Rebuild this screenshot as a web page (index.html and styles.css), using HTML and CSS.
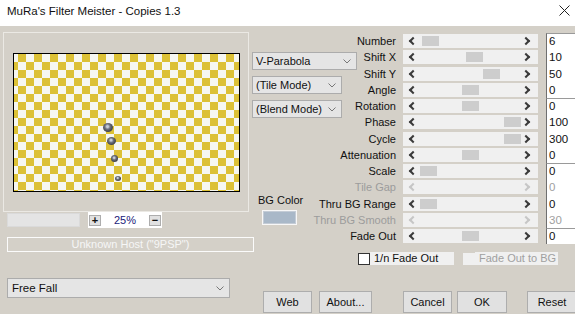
FILE: index.html
```html
<!DOCTYPE html>
<html>
<head>
<meta charset="utf-8">
<link rel="stylesheet" href="styles.css">
</head>
<body>
<div class="window">
  <header class="titlebar">
    <span class="title">MuRa's Filter Meister - Copies 1.3</span>
    <svg class="close" width="11" height="11" viewBox="0 0 11 11"><path d="M0.5 0.5 L10.5 10.5 M10.5 0.5 L0.5 10.5" stroke="#222" stroke-width="1" fill="none"/></svg>
  </header>
  <div class="main">
    <div class="left">
      <div class="group">
        <div class="canvas">
          <span class="gem" style="left:89px;top:69px;width:10px;height:9px"></span>
          <span class="gem" style="left:93px;top:83px;width:9px;height:8px"></span>
          <span class="gem" style="left:97px;top:101px;width:7px;height:7px"></span>
          <span class="gem" style="left:101px;top:122px;width:6px;height:5px"></span>
        </div>
      </div>
      <div class="zoomrow">
        <div class="zoombar"></div>
        <div class="zoomctl">
          <span class="zbtn">+</span>
          <span class="zval">25%</span>
          <span class="zbtn">&minus;</span>
        </div>
      </div>
      <div class="host">Unknown Host ("9PSP")</div>
      <div class="combo freefall">
        <span>Free Fall</span>
        <svg class="chev" width="8" height="5" viewBox="0 0 8 5"><path d="M0.5 0.5 L4 4 L7.5 0.5" stroke="#777" fill="none"/></svg>
      </div>
    </div>
    <div class="right">
      <div class="top">
        <div class="mid">
          <div class="combo parab">
            <span>V-Parabola</span>
            <svg class="chev" width="8" height="5" viewBox="0 0 8 5"><path d="M0.5 0.5 L4 4 L7.5 0.5" stroke="#777" fill="none"/></svg>
          </div>
          <div class="combo mode">
            <span>(Tile Mode)</span>
            <svg class="chev" width="8" height="5" viewBox="0 0 8 5"><path d="M0.5 0.5 L4 4 L7.5 0.5" stroke="#777" fill="none"/></svg>
          </div>
          <div class="combo mode">
            <span>(Blend Mode)</span>
            <svg class="chev" width="8" height="5" viewBox="0 0 8 5"><path d="M0.5 0.5 L4 4 L7.5 0.5" stroke="#777" fill="none"/></svg>
          </div>
          <div class="bglabel">BG Color</div>
          <div class="swatch"></div>
        </div>
        <div class="sliders">
          <div class="grp">
            <div class="row"><div class="lbl"><span>Number</span></div><div class="track"><i class="al"></i><span class="thumb" style="left:19px"></span><i class="ar"></i></div><div class="fld">6</div></div>
            <div class="row"><div class="lbl"><span>Shift X</span></div><div class="track"><i class="al"></i><span class="thumb" style="left:63px"></span><i class="ar"></i></div><div class="fld">10</div></div>
            <div class="row"><div class="lbl"><span>Shift Y</span></div><div class="track"><i class="al"></i><span class="thumb" style="left:80px"></span><i class="ar"></i></div><div class="fld">50</div></div>
            <div class="row"><div class="lbl"><span>Angle</span></div><div class="track"><i class="al"></i><span class="thumb" style="left:59px"></span><i class="ar"></i></div><div class="fld">0</div></div>
          </div>
          <div class="grp">
            <div class="row"><div class="lbl"><span>Rotation</span></div><div class="track"><i class="al"></i><span class="thumb" style="left:59px"></span><i class="ar"></i></div><div class="fld">0</div></div>
            <div class="row"><div class="lbl"><span>Phase</span></div><div class="track"><i class="al"></i><span class="thumb" style="left:101px"></span><i class="ar"></i></div><div class="fld">100</div></div>
            <div class="row"><div class="lbl"><span>Cycle</span></div><div class="track"><i class="al"></i><span class="thumb" style="left:101px"></span><i class="ar"></i></div><div class="fld">300</div></div>
            <div class="row"><div class="lbl"><span>Attenuation</span></div><div class="track"><i class="al"></i><span class="thumb" style="left:59px"></span><i class="ar"></i></div><div class="fld">0</div></div>
          </div>
          <div class="grp">
            <div class="row"><div class="lbl"><span>Scale</span></div><div class="track"><i class="al"></i><span class="thumb" style="left:17px"></span><i class="ar"></i></div><div class="fld">0</div></div>
            <div class="row off"><div class="lbl"><span>Tile Gap</span></div><div class="track"><i class="al"></i><i class="ar"></i></div><div class="fld">0</div></div>
            <div class="row"><div class="lbl"><span>Thru BG Range</span></div><div class="track"><i class="al"></i><span class="thumb" style="left:17px"></span><i class="ar"></i></div><div class="fld">0</div></div>
            <div class="row off"><div class="lbl"><span>Thru BG Smooth</span></div><div class="track"><i class="al"></i><i class="ar"></i></div><div class="fld">30</div></div>
          </div>
          <div class="grp single">
            <div class="row"><div class="lbl"><span>Fade Out</span></div><div class="track"><i class="al"></i><span class="thumb" style="left:59px"></span><i class="ar"></i></div><div class="fld">0</div></div>
          </div>
          <div class="checks">
            <span class="cbox"></span><span class="clabel">1/n Fade Out</span>
            <span class="cbox dis"></span><span class="clabel dis">Fade Out to BG</span>
          </div>
        </div>
      </div>
      <div class="buttons">
        <button class="btn web">Web</button>
        <button class="btn about">About...</button>
        <button class="btn cancel">Cancel</button>
        <button class="btn ok">OK</button>
        <button class="btn reset">Reset</button>
      </div>
    </div>
  </div>
</div>
</body>
</html>
```

FILE: styles.css
```css
* { box-sizing: border-box; }

body {
  margin: 0;
  width: 575px;
  height: 314px;
  overflow: hidden;
  background: #d4d0c8;
  font-family: "Liberation Sans", Arial, sans-serif;
  font-size: 11px;
  color: #111;
}

.window {
  width: 575px;
  height: 314px;
  display: flex;
  flex-direction: column;
}

.titlebar {
  height: 26px;
  background: #fff;
  display: flex;
  align-items: flex-start;
  padding: 4px 0 0 7px;
}

.title {
  font-size: 11.5px;
  line-height: 14px;
  color: #111;
}

.close {
  margin-left: auto;
  margin-right: 5px;
  margin-top: 1px;
}

.main {
  flex: 1;
  display: flex;
}

/* left column */
.left {
  width: 252px;
  padding-left: 3px;
  display: flex;
  flex-direction: column;
}

.group {
  margin-top: 6px;
  width: 246px;
  height: 180px;
  border: 1px solid #ebe9e4;
  padding: 20px 0 0 9px;
}

.canvas {
  position: relative;
  width: 227px;
  height: 139px;
  border: 1px solid #000;
  background-color: #f6f7f1;
  background-image: conic-gradient(#dcc136 25%, #f6f7f1 0 50%, #dcc136 0 75%, #f6f7f1 0);
  background-size: 16px 16px;
  background-position: -4px 0;
}

.gem {
  position: absolute;
  border-radius: 50%;
  background: radial-gradient(circle at 45% 40%, #c4ccd8 0 12%, #6e727e 34%, #45474f 64%, #6c6e74 100%);
}

.zoomrow {
  height: 16px;
  display: flex;
  align-items: flex-start;
}

.zoombar {
  margin-top: 1px;
  margin-left: 4px;
  width: 73px;
  height: 14px;
  background: #e4e4e4;
  border: 1px solid #dadada;
}

.zoomctl {
  margin-left: 8px;
  width: 74px;
  height: 16px;
  background: #fff;
  display: flex;
  align-items: center;
  padding: 0 1px;
}

.zbtn {
  width: 12px;
  height: 11px;
  background: #e1e1e1;
  border: 1px solid #adadad;
  font-size: 11px;
  font-weight: bold;
  line-height: 9px;
  text-align: center;
}

.zval {
  flex: 1;
  text-align: center;
  color: #1a1a7a;
  font-size: 11px;
}

.host {
  margin-top: 9px;
  margin-left: 4px;
  width: 247px;
  height: 15px;
  border: 1px solid #fbfbfb;
  color: #f6f6f6;
  font-size: 11px;
  line-height: 13px;
  text-align: center;
}

.combo {
  display: flex;
  align-items: center;
  background: #e5e5e5;
  border: 1px solid #acacac;
  padding-left: 3px;
  font-size: 11px;
}

.combo .chev {
  margin-left: auto;
}

.freefall {
  margin-top: 26px;
  margin-left: 4px;
  width: 223px;
  height: 20px;
  padding-left: 4px;
  font-size: 11.5px;
}

.freefall .chev { margin-right: 5px; }

/* right side */
.right {
  flex: 1;
  display: flex;
  flex-direction: column;
}

.top {
  height: 265px;
  display: flex;
}

.mid {
  width: 105px;
  display: flex;
  flex-direction: column;
  align-items: flex-start;
}

.parab {
  margin-top: 26px;
  width: 105px;
  height: 18px;
}

.parab .chev { margin-right: 5px; }

.mode {
  margin-top: 6px;
  width: 90px;
  height: 18px;
}

.mode .chev { margin-right: 5px; }

.bglabel {
  margin-top: 76px;
  margin-left: 6px;
  line-height: 13px;
  font-size: 11px;
}

.swatch {
  margin-top: 3px;
  margin-left: 10px;
  width: 35px;
  height: 15px;
  background: #a9b8c8;
  border: 1px solid #f7f7f7;
  box-shadow: inset 0 0 0 1px #c4ccd6;
}

.sliders {
  flex: 1;
  padding-top: 7px;
  display: flex;
  flex-direction: column;
}

.grp {
  height: 65px;
  display: flex;
  flex-direction: column;
}

.grp.single { height: 16.25px; }

.row {
  height: 16.25px;
  display: flex;
  align-items: center;
}

.lbl {
  width: 46px;
  padding-right: 7px;
  display: flex;
  justify-content: flex-end;
  white-space: nowrap;
  font-size: 11px;
}

.row.off .lbl { color: #9c9c9c; }

.track {
  position: relative;
  width: 135px;
  height: 14px;
  background: #f0f0f0;
  display: flex;
  align-items: center;
  justify-content: space-between;
  padding: 0 7px 0 5px;
}

.al, .ar {
  display: block;
  border-color: #3a3a3a;
  border-style: solid;
  width: 6px;
  height: 6px;
  transform: rotate(45deg);
}

.al {
  border-width: 0 0 2px 2px;
  margin-left: 2px;
}

.ar {
  border-width: 2px 2px 0 0;
  margin-right: 2px;
}

.row.off .al, .row.off .ar { border-color: #c6c6c6; }

.thumb {
  position: absolute;
  top: 2px;
  width: 17px;
  height: 10px;
  background: #cdcdcd;
}

.fld {
  margin-left: 8px;
  flex: 1;
  height: 100%;
  background: #fff;
  border-left: 1px solid #6f6f6f;
  border-right: 1px dotted #777;
  padding-left: 2px;
  font-size: 11.5px;
  line-height: 16px;
}

.grp .row:first-child .fld {
  border-top: 1px solid #9a9a9a;
  line-height: 15px;
}

.row.off .fld { color: #a0a0a0; }

.checks {
  margin-top: 8px;
  display: flex;
  align-items: center;
  height: 13px;
}

.cbox {
  margin-left: 1px;
  width: 12px;
  height: 12px;
  background: #fff;
  border: 1px solid #333;
}

.cbox.dis {
  margin-left: 9px;
  background: #f0f0f0;
  border-color: #f0f0f0;
}

.clabel {
  width: 84px;
  height: 13px;
  background: #f0f0f0;
  padding-left: 4px;
  line-height: 13px;
  font-size: 11px;
}

.clabel.dis {
  width: 83px;
  color: #a0a0a0;
}

.buttons {
  display: flex;
  height: 22px;
}

.btn {
  height: 22px;
  margin: 0;
  padding: 0;
  background: #e1e1e1;
  border: 1px solid #adadad;
  font-family: "Liberation Sans", Arial, sans-serif;
  font-size: 11px;
  color: #111;
}

.web { margin-left: 11px; width: 49px; }
.about { margin-left: 7px; width: 53px; }
.cancel { margin-left: 31px; width: 49px; }
.ok { margin-left: 5px; width: 50px; }
.reset { margin-left: 20px; width: 50px; flex-shrink: 0; }
```
